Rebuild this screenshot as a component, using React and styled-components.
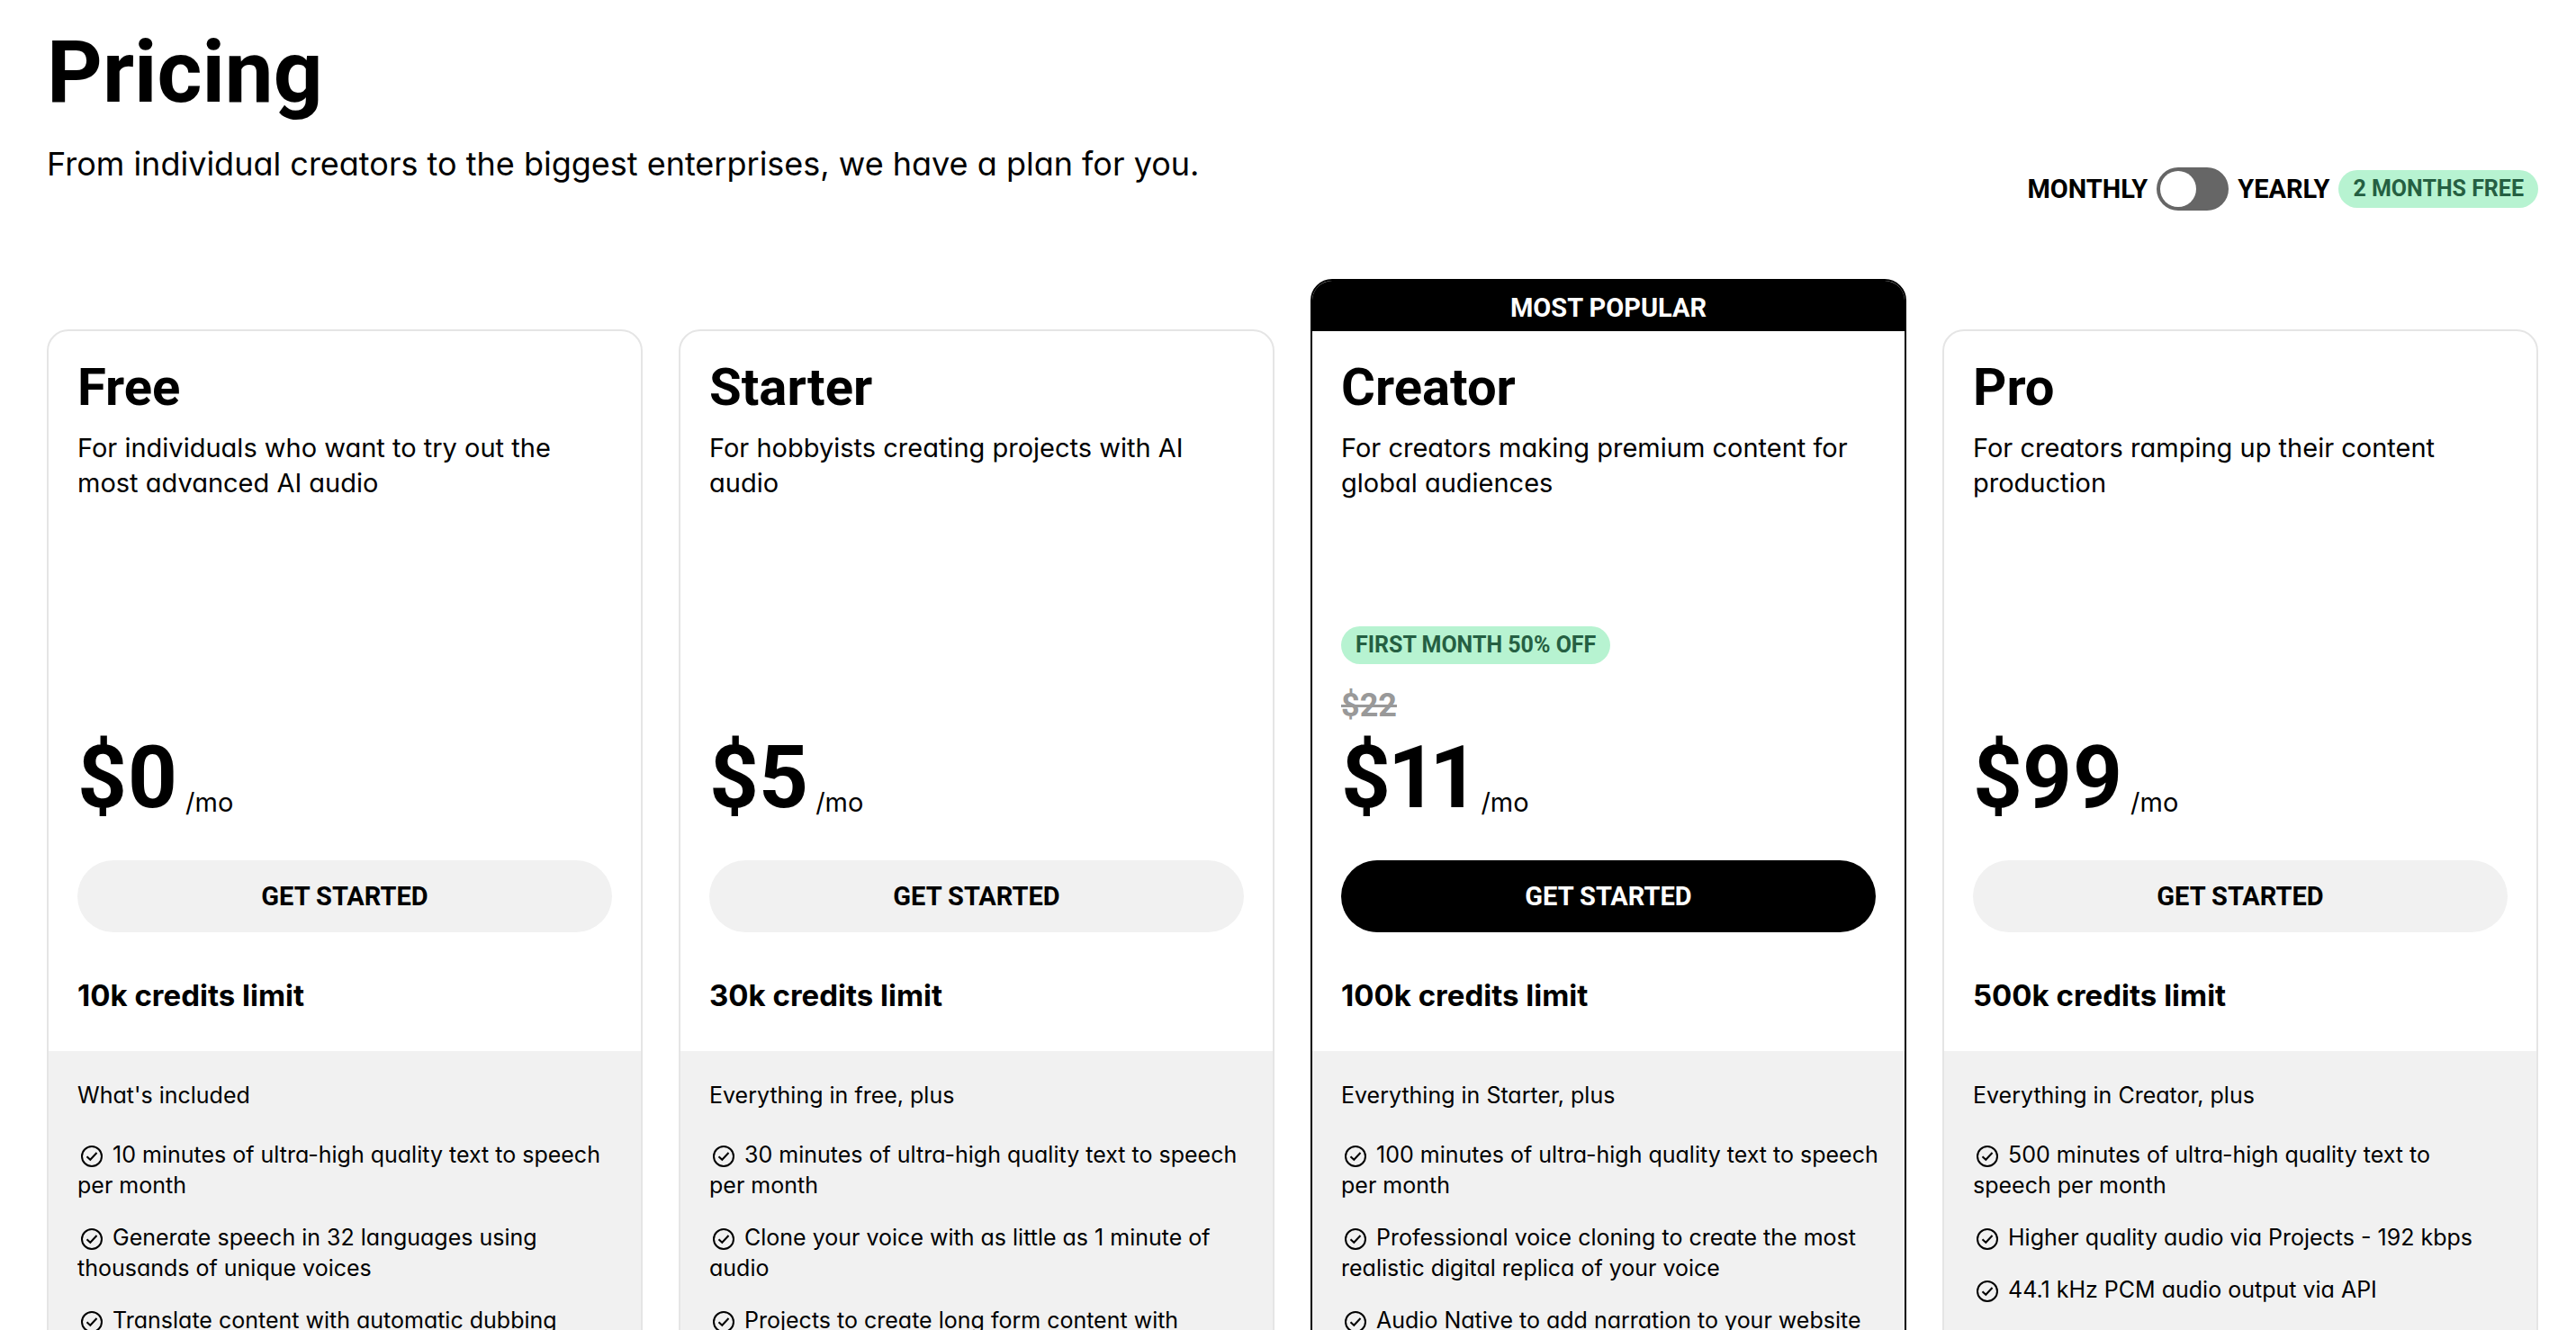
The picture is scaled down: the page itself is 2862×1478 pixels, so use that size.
import React, { useState } from "react";
import styled, { createGlobalStyle, css } from "styled-components";

const display = `Roboto, "Liberation Sans", sans-serif`;
const text = `Inter, "Liberation Sans", sans-serif`;

const GlobalStyle = createGlobalStyle`
  * { box-sizing: border-box; }
  body {
    margin: 0;
    background: #fff;
    color: #000;
    font-family: ${text};
    font-feature-settings: "cv11" 1;
  }
  h1, h2, h3, p, ul { margin: 0; padding: 0; }
`;

const Page = styled.main`
  height: 100vh;
  overflow: hidden;
  padding: 32px 42px 0 52px;
`;

const Header = styled.header`
  display: flex;
  justify-content: space-between;
  align-items: flex-end;
  margin-bottom: 76px;
`;

const Intro = styled.div`
  display: flex;
  flex-direction: column;
  gap: 30px;
  padding-bottom: 28px;
`;

const Title = styled.h1`
  font: 700 96px/96px ${display};
`;

const Subtitle = styled.p`
  font-size: 36px;
  line-height: 48px;
`;

const Billing = styled.div`
  display: flex;
  align-items: center;
  gap: 10px;
`;

const BillingLabel = styled.label`
  font: 700 29px/48px ${display};
`;

const Switch = styled.input`
  appearance: none;
  display: flex;
  align-items: center;
  width: 80px;
  height: 48px;
  margin: 0;
  padding: 4px;
  border-radius: 24px;
  background: #666;
  cursor: pointer;

  &::before {
    content: "";
    width: 40px;
    height: 40px;
    border-radius: 50%;
    background: #fff;
  }

  &:checked {
    justify-content: flex-end;
    background: #000;
  }
`;

const Badge = styled.span`
  align-self: ${(p) => (p.$start ? "flex-start" : "center")};
  padding: 0 16px;
  border-radius: 21px;
  background: #b7f3d1;
  color: #255f42;
  font: 700 25px/42px ${display};
  white-space: nowrap;
`;

const Plans = styled.section`
  display: grid;
  grid-template-columns: repeat(4, minmax(0, 1fr));
  gap: 40px;
`;

const Card = styled.article`
  display: flex;
  flex-direction: column;
  margin-top: 56px;
  border: 2px solid #e5e5e5;
  border-radius: 24px;
  overflow: hidden;

  ${(p) =>
    p.$popular &&
    css`
      margin-top: 0;
      border-color: #000;
    `}
`;

const Ribbon = styled.p`
  padding-top: 4px;
  background: #000;
  color: #fff;
  font: 700 29px/52px ${display};
  text-align: center;
`;

const Summary = styled.div`
  display: flex;
  flex-direction: column;
  padding: 32px 32px 40px;
`;

const PlanName = styled.h2`
  margin-bottom: 18px;
  font: 700 58px/60px ${display};
`;

const PlanText = styled.p`
  min-height: 78px;
  font-size: 29px;
  line-height: 39px;
`;

const PriceArea = styled.div`
  display: flex;
  flex-direction: column;
  justify-content: flex-end;
  min-height: 356px;
  margin-bottom: 44px;
`;

const OldPrice = styled.p`
  margin: 26px 0 12px;
  color: #999;
  font: 700 36px/40px ${display};
`;

const Price = styled.p`
  display: flex;
  align-items: flex-end;
  gap: 8px;
  font: 700 96px/96px ${display};
  font-variant-numeric: proportional-nums;
`;

const Period = styled.span`
  font: 400 29px/40px ${text};
`;

const StartButton = styled.button`
  width: 100%;
  height: 80px;
  margin-bottom: 48px;
  border: 0;
  border-radius: 40px;
  background: ${(p) => (p.$popular ? "#000" : "#f1f1f1")};
  color: ${(p) => (p.$popular ? "#fff" : "#000")};
  font: 700 29px/40px ${display};
  cursor: pointer;
`;

const Credits = styled.h3`
  font-size: 33px;
  font-weight: 700;
  line-height: 44px;
`;

const Details = styled.div`
  flex: 1;
  padding: 32px 28px 32px 32px;
  background: #f1f1f1;
  font-size: 25px;
  line-height: 34px;
`;

const Features = styled.ul`
  display: flex;
  flex-direction: column;
  gap: 24px;
  margin-top: 32px;
  list-style: none;
`;

const Check = styled.svg`
  width: 32px;
  height: 32px;
  margin: -8px 0;
  vertical-align: -1px;
`;

const CheckIcon = () => (
  <Check viewBox="0 0 32 32" fill="none" stroke="currentColor" strokeWidth="2" aria-hidden="true">
    <circle cx="16" cy="16" r="11" />
    <path d="M10.5 16.2l3.8 3.6 7.2-7.8" />
  </Check>
);

const plans = [
  {
    name: "Free",
    text: "For individuals who want to try out the most advanced AI audio",
    price: "$0",
    credits: "10k credits limit",
    intro: "What's included",
    features: [
      "10 minutes of ultra-high quality text to speech per month",
      "Generate speech in 32 languages using thousands of unique voices",
      "Translate content with automatic dubbing",
    ],
  },
  {
    name: "Starter",
    text: "For hobbyists creating projects with AI audio",
    price: "$5",
    credits: "30k credits limit",
    intro: "Everything in free, plus",
    features: [
      "30 minutes of ultra-high quality text to speech per month",
      "Clone your voice with as little as 1 minute of audio",
      "Projects to create long form content with",
    ],
  },
  {
    name: "Creator",
    popular: true,
    offer: "FIRST MONTH 50% OFF",
    oldPrice: "$22",
    text: "For creators making premium content for global audiences",
    price: "$11",
    credits: "100k credits limit",
    intro: "Everything in Starter, plus",
    features: [
      "100 minutes of ultra-high quality text to speech per month",
      "Professional voice cloning to create the most realistic digital replica of your voice",
      "Audio Native to add narration to your website",
    ],
  },
  {
    name: "Pro",
    text: "For creators ramping up their content production",
    price: "$99",
    credits: "500k credits limit",
    intro: "Everything in Creator, plus",
    features: [
      "500 minutes of ultra-high quality text to speech per month",
      "Higher quality audio via Projects - 192 kbps",
      "44.1 kHz PCM audio output via API",
    ],
  },
];

const Plan = ({ plan }) => (
  <Card $popular={plan.popular}>
    {plan.popular && <Ribbon>MOST POPULAR</Ribbon>}
    <Summary>
      <PlanName>{plan.name}</PlanName>
      <PlanText>{plan.text}</PlanText>
      <PriceArea>
        {plan.offer && <Badge $start>{plan.offer}</Badge>}
        {plan.oldPrice && (
          <OldPrice>
            <s>{plan.oldPrice}</s>
          </OldPrice>
        )}
        <Price>
          {plan.price}
          <Period>/mo</Period>
        </Price>
      </PriceArea>
      <StartButton type="button" $popular={plan.popular}>GET STARTED</StartButton>
      <Credits>{plan.credits}</Credits>
    </Summary>
    <Details>
      <p>{plan.intro}</p>
      <Features>
        {plan.features.map((feature) => (
          <li key={feature}>
            <CheckIcon /> {feature}
          </li>
        ))}
      </Features>
    </Details>
  </Card>
);

export default function App() {
  const [yearly, setYearly] = useState(false);
  return (
    <>
      <GlobalStyle />
      <Page>
        <Header>
          <Intro>
            <Title>Pricing</Title>
            <Subtitle>From individual creators to the biggest enterprises, we have a plan for you.</Subtitle>
          </Intro>
          <Billing>
            <BillingLabel htmlFor="billing">MONTHLY</BillingLabel>
            <Switch
              id="billing"
              type="checkbox"
              role="switch"
              checked={yearly}
              onChange={(e) => setYearly(e.target.checked)}
            />
            <BillingLabel htmlFor="billing">YEARLY</BillingLabel>
            <Badge>2 MONTHS FREE</Badge>
          </Billing>
        </Header>
        <Plans>
          {plans.map((plan) => (
            <Plan key={plan.name} plan={plan} />
          ))}
        </Plans>
      </Page>
    </>
  );
}
